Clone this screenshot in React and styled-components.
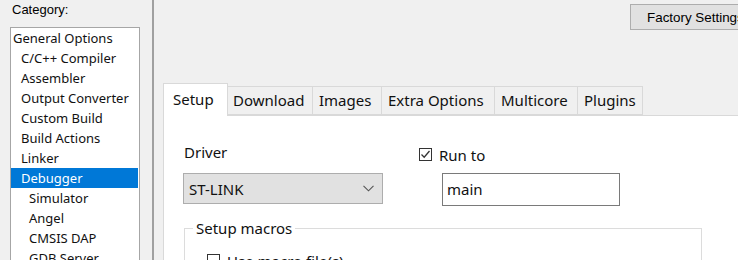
import React from "react";
import styled, {createGlobalStyle} from "styled-components";

const Global = createGlobalStyle`
  html, body {
    margin: 0;
    padding: 0;
    background: #f0f0f0;
    overflow: hidden;
  }
`

const Page = styled.div`
  display: flex;
  width: 738px;
  height: 260px;
  overflow: hidden;
  background: #f0f0f0;
  color: #000;
`

const LeftPane = styled.div`
  width: 142px;
  padding-left: 10px;
  flex-shrink: 0;
`

const CategoryLabel = styled.div`
  font-family: "Liberation Sans", Arial, sans-serif;
  font-size: 13px;
  line-height: 16px;
  padding: 2px 0 0 2px;
  height: 27px;
  box-sizing: border-box;
`

const ListBox = styled.div`
  width: 130px;
  height: 260px;
  box-sizing: border-box;
  border: 1px solid #a6a6a6;
  background: #fff;
  padding-right: 1px;
`

const ListItem = styled.div`
  height: 20px;
  line-height: 20px;
  font-family: "Noto Sans", sans-serif;
  font-size: 13px;
  padding-left: ${p => 2 + p.level * 8}px;
  background: ${p => (p.selected ? "#0078d7" : "transparent")};
  color: ${p => (p.selected ? "#fff" : "#111")};
  white-space: nowrap;
`

const Divider = styled.div`
  width: 2px;
  flex-shrink: 0;
  background: #a0a0a0;
`

const RightPane = styled.div`
  flex: 1;
  padding-left: 9px;
  display: flex;
  flex-direction: column;
  min-width: 0;
`

const TopBar = styled.div`
  height: 83px;
  flex-shrink: 0;
  padding: 4px 0 0 467px;
  box-sizing: border-box;
  white-space: nowrap;
`

const FactoryButton = styled.button`
  width: 124px;
  height: 26px;
  box-sizing: border-box;
  background: #e1e1e1;
  border: 1px solid #adadad;
  font-family: "Liberation Sans", Arial, sans-serif;
  font-size: 13.4px;
  text-align: left;
  padding: 0 0 0 16px;
  color: #000;
`

const TabStrip = styled.div`
  display: flex;
  align-items: flex-end;
  height: 32px;
  flex-shrink: 0;
`

const Tab = styled.div`
  box-sizing: border-box;
  height: ${p => (p.active ? 33 : 29)}px;
  margin-bottom: ${p => (p.active ? -1 : 0)}px;
  width: ${p => p.w}px;
  background: ${p => (p.active ? "#fff" : "#f0f0f0")};
  border: 1px solid #d9d9d9;
  border-bottom: ${p => (p.active ? "none" : "1px solid #d9d9d9")};
  margin-left: ${p => (p.first ? 0 : -1)}px;
  font-family: "Noto Sans", sans-serif;
  font-size: 15px;
  line-height: ${p => (p.active ? 31 : 27)}px;
  padding-left: ${p => p.pad}px;
  position: relative;
  z-index: ${p => (p.active ? 1 : 0)};
  white-space: nowrap;
  color: #111;
`

const TabPage = styled.div`
  flex: 1;
  background: #fff;
  border-left: 1px solid #d9d9d9;
  border-top: 1px solid #d9d9d9;
  padding: 26px 0 0 19px;
  font-family: "Noto Sans", sans-serif;
  font-size: 15px;
  color: #111;
`

const FormRow = styled.div`
  display: flex;
  gap: 36px;
`

const Column = styled.div`
  display: flex;
  flex-direction: column;
`

const FieldLabel = styled.div`
  height: 21px;
  line-height: 21px;
  padding-left: 1px;
  margin-bottom: 10px;
`

const Combo = styled.div`
  width: 200px;
  height: 31px;
  box-sizing: border-box;
  background: #e1e1e1;
  border: 1px solid #adadad;
  display: flex;
  align-items: center;
  justify-content: space-between;
  padding: 0 8px 0 5px;
`

const CheckRow = styled.label`
  display: flex;
  align-items: center;
  gap: 7px;
  height: 21px;
  margin-top: 2px;
`

const Box = styled.span`
  width: 13px;
  height: 13px;
  box-sizing: border-box;
  border: 1px solid #333;
  background: #fff;
  display: inline-flex;
  align-items: center;
  justify-content: center;
`

const TextInput = styled.div`
  margin: 8px 0 0 23px;
  width: 178px;
  height: 33px;
  box-sizing: border-box;
  border: 1px solid #7a7a7a;
  line-height: 31px;
  padding-left: 4px;
`

const Group = styled.fieldset`
  margin: 12px 0 0 1px;
  width: 518px;
  box-sizing: border-box;
  border: 1px solid #dcdcdc;
  padding: 10px 0 0 22px;
  height: 60px;
`

const Legend = styled.legend`
  margin-left: -14px;
  padding: 0 3px;
  line-height: 20px;
`

function Check({checked}) {
    return (
        <Box>
            {checked ? (
                <svg width="11" height="11" viewBox="0 0 11 11">
                    <polyline points="1.5,5.5 4.2,8.2 9.5,2" fill="none" stroke="#333" strokeWidth="1.3" />
                </svg>
            ) : null}
        </Box>
    );
}

const categories = [
    ["General Options", 0],
    ["C/C++ Compiler", 1],
    ["Assembler", 1],
    ["Output Converter", 1],
    ["Custom Build", 1],
    ["Build Actions", 1],
    ["Linker", 1],
    ["Debugger", 1],
    ["Simulator", 2],
    ["Angel", 2],
    ["CMSIS DAP", 2],
    ["GDB Server", 2],
];

const tabs = [
    ["Setup", 65, 9],
    ["Download", 86, 5],
    ["Images", 70, 6],
    ["Extra Options", 114, 6],
    ["Multicore", 84, 6],
    ["Plugins", 66, 6],
];

export default function App() {
    return (<>
        <Global />
        <Page>
            <LeftPane>
                <CategoryLabel>Category:</CategoryLabel>
                <ListBox>
                    {categories.map(([name, level]) => (
                        <ListItem key={name} level={level} selected={name === "Debugger"}>{name}</ListItem>
                    ))}
                </ListBox>
            </LeftPane>
            <Divider />
            <RightPane>
                <TopBar>
                    <FactoryButton>Factory Settings</FactoryButton>
                </TopBar>
                <TabStrip>
                    {tabs.map(([name, w, pad], i) => (
                        <Tab key={name} w={w} pad={pad} first={i === 0} active={i === 0}>{name}</Tab>
                    ))}
                </TabStrip>
                <TabPage>
                    <FormRow>
                        <Column>
                            <FieldLabel>Driver</FieldLabel>
                            <Combo>
                                <span>ST-LINK</span>
                                <svg width="11" height="7" viewBox="0 0 11 7">
                                    <polyline points="0.5,0.8 5.5,5.8 10.5,0.8" fill="none" stroke="#555" strokeWidth="1.1" />
                                </svg>
                            </Combo>
                        </Column>
                        <Column>
                            <CheckRow><Check checked />Run to</CheckRow>
                            <TextInput>main</TextInput>
                        </Column>
                    </FormRow>
                    <Group>
                        <Legend>Setup macros</Legend>
                        <CheckRow><Check />Use macro file(s)</CheckRow>
                    </Group>
                </TabPage>
            </RightPane>
        </Page>
    </>);
}
